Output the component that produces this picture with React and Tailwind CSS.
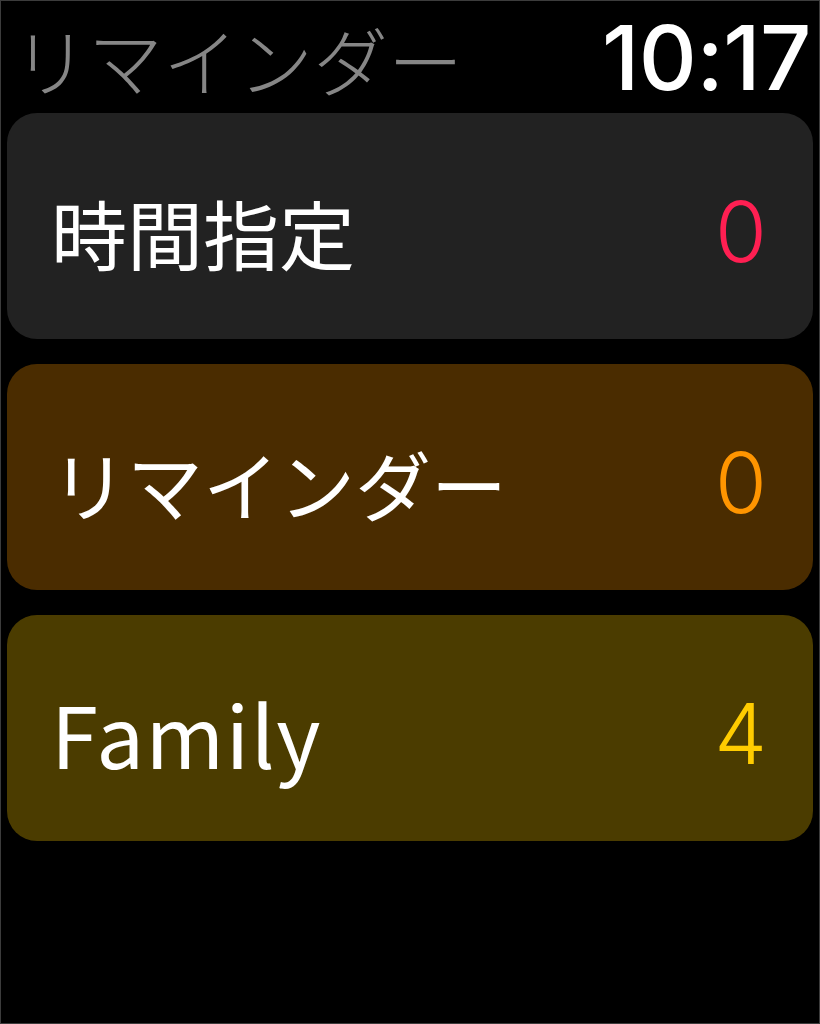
export default function App() {
  const lists = [
    { name: "時間指定", count: 0, bg: "bg-[#222222]", fg: "text-[#ff1f52]", size: "text-[76px]" },
    { name: "リマインダー", count: 0, bg: "bg-[#4a2c00]", fg: "text-[#ff9500]", size: "text-[76px]" },
    { name: "Family", count: 4, bg: "bg-[#4b3c00]", fg: "text-[#ffcc00]", size: "text-[85px] tracking-[1.5px] -mt-[6px]" },
  ];

  return (
    <div
      className="w-[820px] h-[1024px] bg-black border border-[#3c3c3c] overflow-hidden"
      style={{ fontFamily: '"Noto Sans", "Noto Sans CJK JP", sans-serif' }}
    >
      {/* status row */}
      <div className="flex items-center justify-between pl-[12px] pr-[8px] h-[112px] pt-[2px]">
        <span className="text-[75px] leading-none text-[#868686] font-['Noto_Sans_CJK_JP',sans-serif] font-light">
          リマインダー
        </span>
        <span className="text-[90px] leading-none text-white font-['Inter',sans-serif] font-medium tracking-[-0.5px]">
          10:17
        </span>
      </div>

      {/* lists */}
      <div className="flex flex-col gap-[25px] px-[6px]">
        {lists.map((l) => (
          <div
            key={l.name}
            className={`h-[226px] rounded-[30px] flex items-center justify-between pl-[44px] pr-[46px] pt-[12px] ${l.bg}`}
          >
            <span className={`leading-none text-white font-['Noto_Sans_CJK_JP',sans-serif] ${l.size}`}>
              {l.name}
            </span>
            <span className={`text-[84px] leading-none font-['Inter',sans-serif] font-light ${l.fg}`}>
              {l.count}
            </span>
          </div>
        ))}
      </div>
    </div>
  );
}
